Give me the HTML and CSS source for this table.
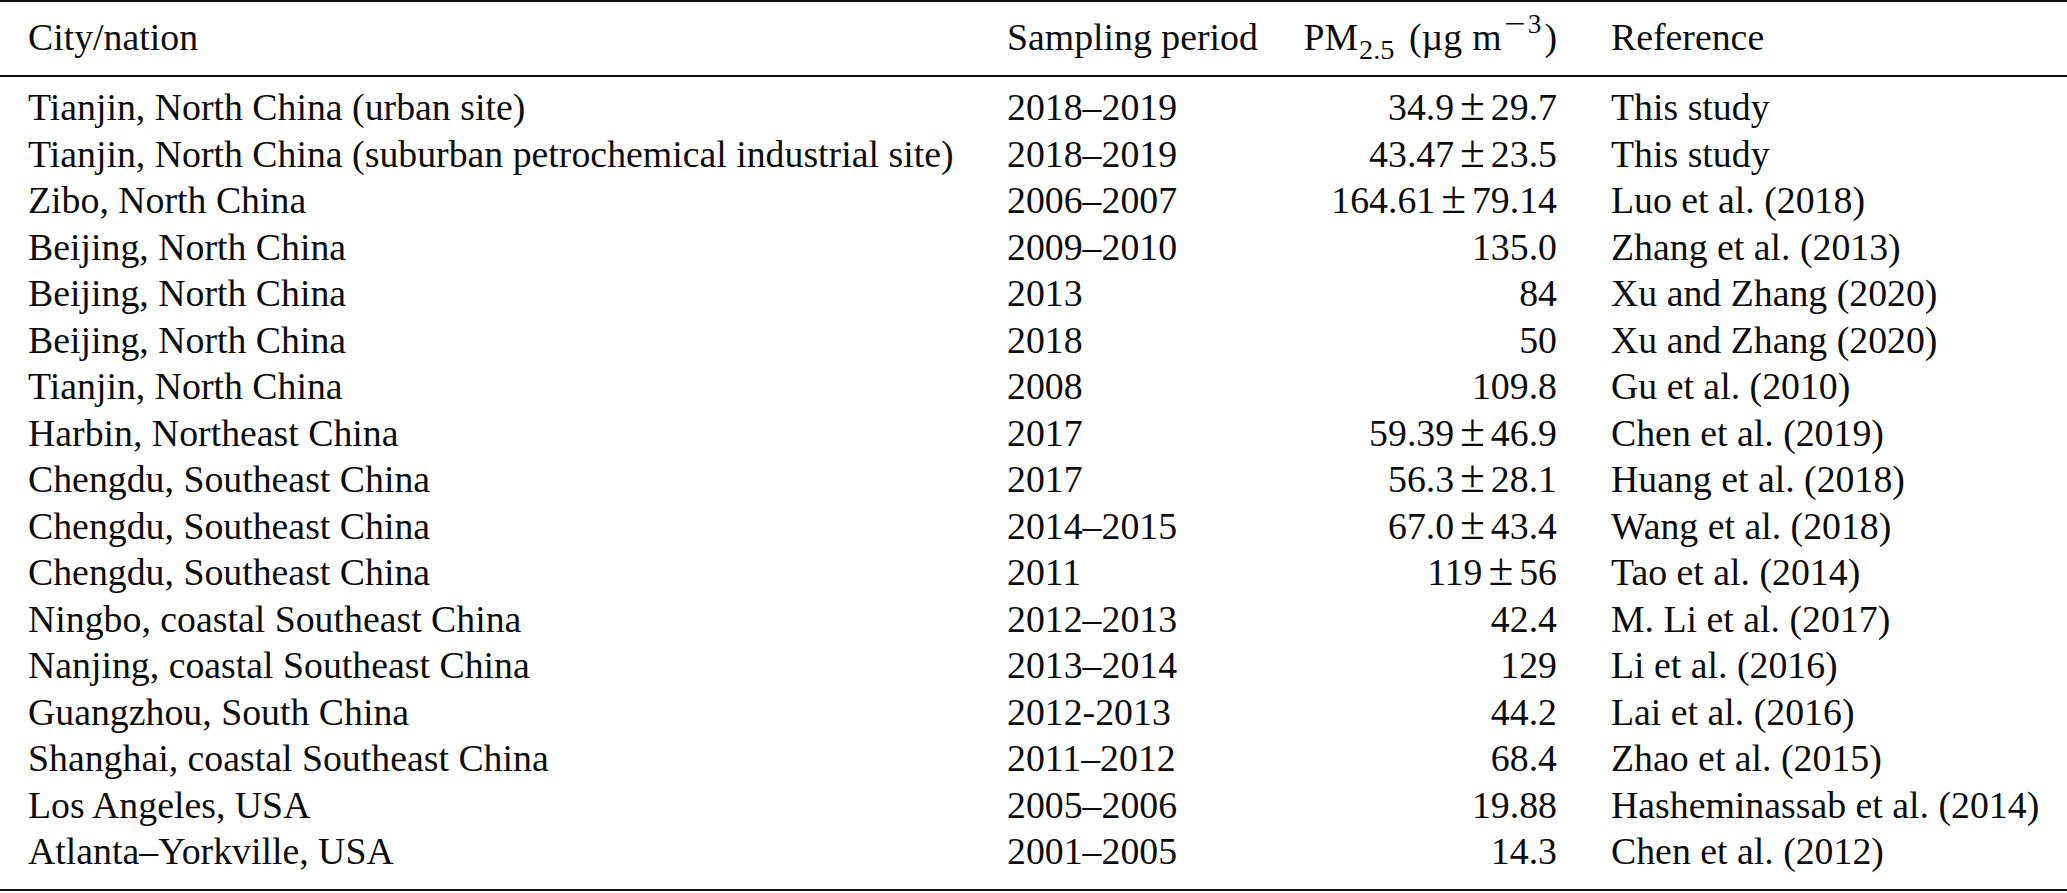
FILE: index.html
```html
<!DOCTYPE html>
<html lang="en">
<head>
<meta charset="utf-8">
<title>PM2.5 comparison table</title>
<link rel="stylesheet" href="styles.css">
</head>
<body>
<table class="data">
  <colgroup>
    <col class="c-city">
    <col class="c-period">
    <col class="c-pm">
    <col class="c-ref">
  </colgroup>
  <thead>
    <tr>
      <th class="city">City/nation</th>
      <th class="period">Sampling period</th>
      <th class="pm">PM<sub>2.5</sub> (µg<span class="thin"></span>m<sup><span class="minus">−</span>3</sup>)</th>
      <th class="ref">Reference</th>
    </tr>
  </thead>
  <tbody>
    <tr><td class="city">Tianjin, North China (urban site)</td><td class="period">2018–2019</td><td class="pm">34.9<span class="pmo">±</span>29.7</td><td class="ref">This study</td></tr>
    <tr><td class="city">Tianjin, North China (suburban petrochemical industrial site)</td><td class="period">2018–2019</td><td class="pm">43.47<span class="pmo">±</span>23.5</td><td class="ref">This study</td></tr>
    <tr><td class="city">Zibo, North China</td><td class="period">2006–2007</td><td class="pm">164.61<span class="pmo">±</span>79.14</td><td class="ref">Luo et al. (2018)</td></tr>
    <tr><td class="city">Beijing, North China</td><td class="period">2009–2010</td><td class="pm">135.0</td><td class="ref">Zhang et al. (2013)</td></tr>
    <tr><td class="city">Beijing, North China</td><td class="period">2013</td><td class="pm">84</td><td class="ref">Xu and Zhang (2020)</td></tr>
    <tr><td class="city">Beijing, North China</td><td class="period">2018</td><td class="pm">50</td><td class="ref">Xu and Zhang (2020)</td></tr>
    <tr><td class="city">Tianjin, North China</td><td class="period">2008</td><td class="pm">109.8</td><td class="ref">Gu et al. (2010)</td></tr>
    <tr><td class="city">Harbin, Northeast China</td><td class="period">2017</td><td class="pm">59.39<span class="pmo">±</span>46.9</td><td class="ref">Chen et al. (2019)</td></tr>
    <tr><td class="city">Chengdu, Southeast China</td><td class="period">2017</td><td class="pm">56.3<span class="pmo">±</span>28.1</td><td class="ref">Huang et al. (2018)</td></tr>
    <tr><td class="city">Chengdu, Southeast China</td><td class="period">2014–2015</td><td class="pm">67.0<span class="pmo">±</span>43.4</td><td class="ref">Wang et al. (2018)</td></tr>
    <tr><td class="city">Chengdu, Southeast China</td><td class="period">2011</td><td class="pm">119<span class="pmo">±</span>56</td><td class="ref">Tao et al. (2014)</td></tr>
    <tr><td class="city">Ningbo, coastal Southeast China</td><td class="period">2012–2013</td><td class="pm">42.4</td><td class="ref">M. Li et al. (2017)</td></tr>
    <tr><td class="city">Nanjing, coastal Southeast China</td><td class="period">2013–2014</td><td class="pm">129</td><td class="ref">Li et al. (2016)</td></tr>
    <tr><td class="city">Guangzhou, South China</td><td class="period">2012-2013</td><td class="pm">44.2</td><td class="ref">Lai et al. (2016)</td></tr>
    <tr><td class="city">Shanghai, coastal Southeast China</td><td class="period">2011–2012</td><td class="pm">68.4</td><td class="ref">Zhao et al. (2015)</td></tr>
    <tr><td class="city">Los Angeles, USA</td><td class="period">2005–2006</td><td class="pm">19.88</td><td class="ref">Hasheminassab et al. (2014)</td></tr>
    <tr><td class="city">Atlanta–Yorkville, USA</td><td class="period">2001–2005</td><td class="pm">14.3</td><td class="ref">Chen et al. (2012)</td></tr>
  </tbody>
</table>
</body>
</html>
```

FILE: styles.css
```css
html, body {
  margin: 0;
  padding: 0;
  background: #ffffff;
}

body {
  font-family: "Liberation Serif", "Times New Roman", serif;
  font-size: 37.8px;
  color: #0d0d0d;
}

.data {
  width: 2067px;
  table-layout: fixed;
  border-collapse: collapse;
  border-top: 2px solid #111111;
  border-bottom: 2px solid #111111;
}

.c-city { width: 1007px; }
.c-period { width: 270px; }
.c-pm { width: 280px; }
.c-ref { width: 510px; }

.data th,
.data td {
  padding: 0;
  font-weight: normal;
  line-height: 46.5px;
  height: 46.5px;
  white-space: nowrap;
  text-align: left;
  vertical-align: top;
}

.data .city { padding-left: 28px; }
.data .pm { text-align: right; }
.data .ref { padding-left: 54px; }

.data thead th {
  padding-top: 12px;
  padding-bottom: 14.5px;
  border-bottom: 2px solid #111111;
}

.data tbody tr:first-child td { padding-top: 7px; }
.data tbody tr:last-child td { padding-bottom: 14.5px; }

sub, sup {
  line-height: 0;
  position: relative;
  vertical-align: baseline;
}
sub {
  font-size: 0.75em;
  top: 0.3em;
  margin-left: 1px;
  margin-right: 5px;
}
sup {
  font-size: 0.72em;
  top: -0.62em;
  margin-right: 3px;
}

.thin {
  display: inline-block;
  width: 10px;
}

.minus {
  display: inline-block;
  transform: scaleX(1.4);
  margin: 0 0.2em;
}

.pmo {
  font-size: 1.2em;
  line-height: 0;
  margin: 0 0.13em;
}
```
